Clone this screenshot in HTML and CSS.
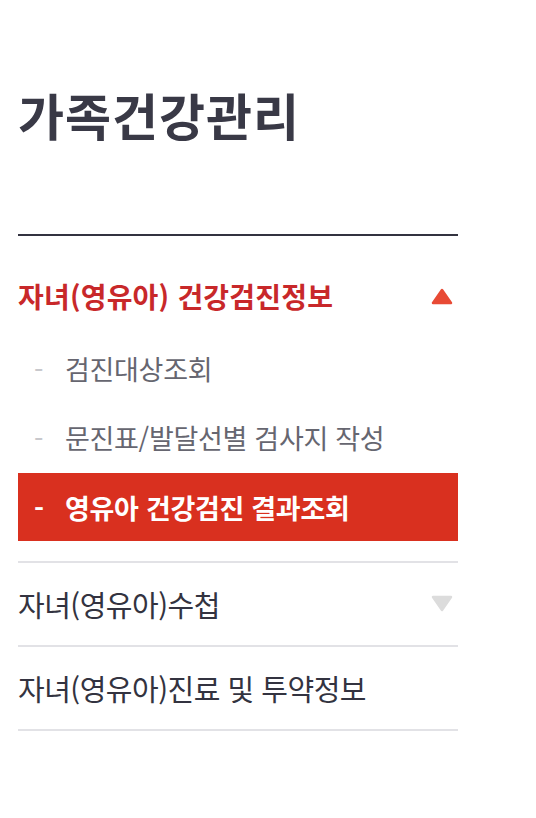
FILE: index.html
```html
<!DOCTYPE html>
<html lang="ko">
<head>
<meta charset="utf-8">
<link rel="stylesheet" href="styles.css">
</head>
<body>
<nav class="lnb">
  <h2 class="lnb-title">가족건강관리</h2>
  <ul class="menu">
    <li class="menu-item open">
      <div class="menu-head">
        <span class="menu-label">자녀(영유아) 건강검진정보</span>
        <svg class="arrow" width="22" height="18" viewBox="0 0 22 18"><path d="M11 3 L20 16 L2 16 Z" fill="#e84a35" stroke="#e84a35" stroke-width="2.5" stroke-linejoin="round"/></svg>
      </div>
      <ul class="sub">
        <li class="sub-item"><span class="dash">-</span><span>검진대상조회</span></li>
        <li class="sub-item"><span class="dash">-</span><span>문진표/발달선별 검사지 작성</span></li>
        <li class="sub-item active"><span class="dash">-</span><span>영유아 건강검진 결과조회</span></li>
      </ul>
    </li>
    <li class="menu-item">
      <div class="menu-head">
        <span class="menu-label">자녀(영유아)수첩</span>
        <svg class="arrow" width="22" height="18" viewBox="0 0 22 18"><path d="M2 2 L20 2 L11 15 Z" fill="#dcdcdc" stroke="#dcdcdc" stroke-width="2.5" stroke-linejoin="round"/></svg>
      </div>
    </li>
    <li class="menu-item">
      <div class="menu-head">
        <span class="menu-label">자녀(영유아)진료 및 투약정보</span>
      </div>
    </li>
  </ul>
</nav>
</body>
</html>
```

FILE: styles.css
```css
* { box-sizing: border-box; }
html, body { margin: 0; padding: 0; background: #fff; }
body {
  font-family: "Noto Sans CJK KR", "Noto Sans", sans-serif;
  color: #333;
}
.lnb {
  width: 440px;
  margin-left: 18px;
  padding-top: 78px;
}
.lnb-title {
  margin: 0;
  font-size: 50px;
  font-weight: 700;
  letter-spacing: 1px;
  line-height: 72px;
  color: #393946;
}
.menu {
  list-style: none;
  margin: 84px 0 0 0;
  padding: 0;
  border-top: 2px solid #333340;
}
.menu-item {
  border-bottom: 2px solid #e2e2e6;
}
.menu-head {
  display: flex;
  align-items: center;
  justify-content: space-between;
  height: 82px;
  font-size: 29px;
  letter-spacing: -0.5px;
  color: #333340;
}
.menu-item.open {
  padding-bottom: 20px;
}
.menu-item.open .menu-head {
  height: 120px;
  font-size: 28px;
  font-weight: 700;
  color: #c8282a;
  letter-spacing: 0.2px;
}
.arrow {
  display: block;
  margin-right: 5px;
}
.sub {
  list-style: none;
  margin: -21px 0 0 0;
  padding: 0;
  display: flex;
  flex-direction: column;
  gap: 2px;
}
.sub-item {
  display: flex;
  align-items: center;
  height: 67px;
  padding-left: 16px;
  font-size: 27px;
  letter-spacing: -0.3px;
  color: #666670;
}
.sub-item .dash {
  width: 31px;
  color: #c8c8cc;
}
.sub-item.active {
  height: 68px;
  background: #d9301f;
  color: #fff;
  font-weight: 700;
}
.sub-item.active .dash { color: #fff; }
```
